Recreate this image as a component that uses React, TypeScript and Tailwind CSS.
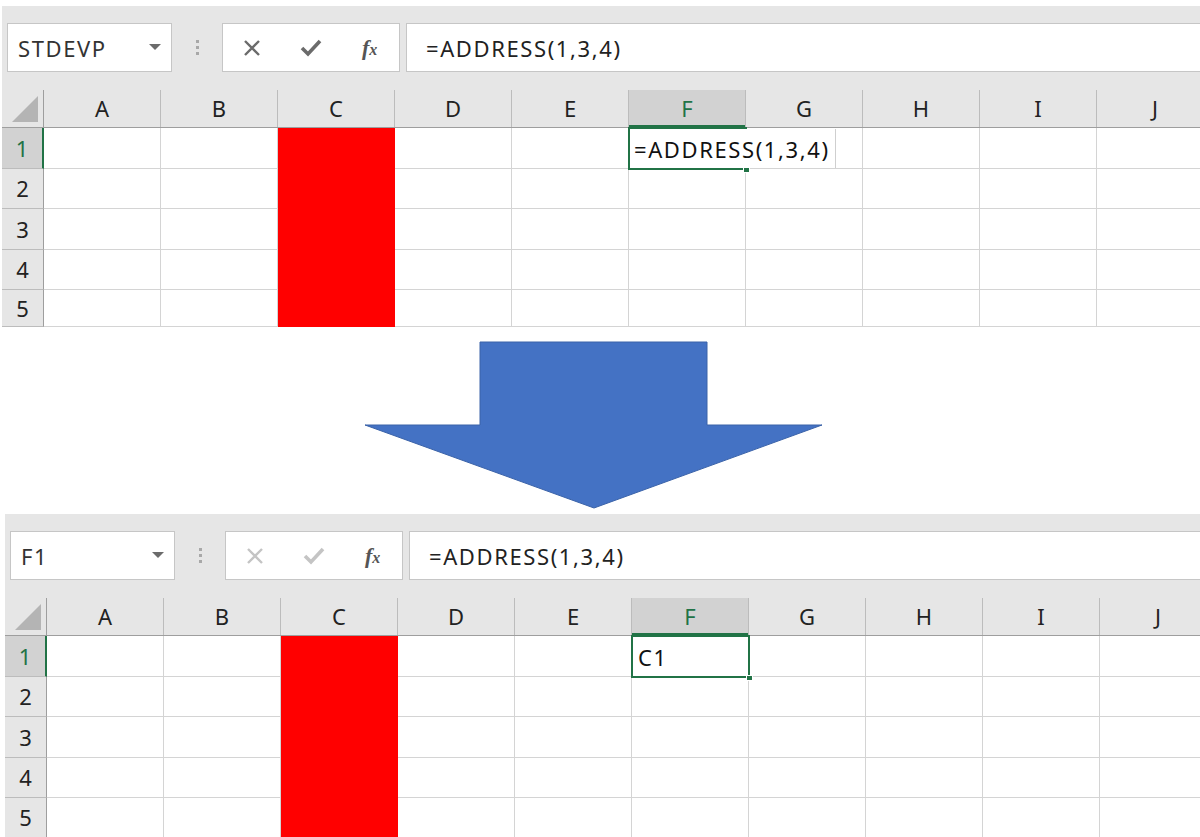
import React from "react";

const COLS = ["A", "B", "C", "D", "E", "F", "G", "H", "I", "J"];
const ROW_H = [41, 40, 41, 40, 40];

function Sheet({
  name,
  formula,
  cellText,
  editing,
  lastRowH,
}: {
  name: string;
  formula: string;
  cellText: string;
  editing: boolean;
  lastRowH: number;
}) {
  const iconColor = editing ? "#6b6b6b" : "#c4c4c4";
  const heights = [...ROW_H.slice(0, 4), lastRowH];
  return (
    <div className="w-full overflow-hidden bg-white font-['Noto_Sans','Noto_Sans_CJK_JP',sans-serif]">
      {/* toolbar */}
      <div className="h-[84px] bg-[#e6e6e6] flex items-start pt-[17px] pl-[5px]">
        <div className="w-[165px] h-[49px] shrink-0 bg-white border border-[#c6c6c6] flex items-center justify-between pl-[10px] pr-[10px]">
          <span className="text-[22px] tracking-[1.6px] leading-none text-[#333]">{name}</span>
          <svg width="12" height="7" viewBox="0 0 12 7">
            <path d="M0 0 L12 0 L6 6 Z" fill="#6b6b6b" />
          </svg>
        </div>
        <div className="w-[50px] h-[49px] shrink-0 flex flex-col items-center justify-center gap-[3px]">
          <div className="w-[3px] h-[3px] bg-[#a8a8a8]" />
          <div className="w-[3px] h-[3px] bg-[#a8a8a8]" />
          <div className="w-[3px] h-[3px] bg-[#a8a8a8]" />
        </div>
        <div className="w-[178px] h-[49px] shrink-0 bg-white border border-[#c6c6c6] flex items-center">
          <div className="w-[59px] flex justify-center">
            <svg width="18" height="18" viewBox="0 0 18 18">
              <path d="M2 2 L16 16 M16 2 L2 16" stroke={iconColor} strokeWidth="2.4" fill="none" />
            </svg>
          </div>
          <div className="w-[59px] flex justify-center">
            <svg width="22" height="18" viewBox="0 0 22 18">
              <path d="M2 9 L8 15 L20 2" stroke={iconColor} strokeWidth="3.6" fill="none" />
            </svg>
          </div>
          <div className="w-[59px] flex justify-center">
            <span className="font-['Liberation_Serif',serif] italic font-bold text-[22px] leading-none text-[#555]">
              f<span className="text-[16px]">x</span>
            </span>
          </div>
        </div>
        <div className="ml-[6px] flex-1 h-[49px] bg-white border border-r-0 border-[#c6c6c6] flex items-center pl-[19px]">
          <span className="text-[22px] tracking-[1.6px] leading-none text-[#222]">{formula}</span>
        </div>
      </div>

      {/* grid */}
      <div className="relative">
        {/* header row */}
        <div className="flex h-[38px] bg-[#e6e6e6] border-b border-[#9e9e9e]">
          <div className="w-[42px] shrink-0 border-r border-[#9e9e9e] flex items-end justify-end pr-[5px] pb-[5px]">
            <svg width="26" height="26" viewBox="0 0 26 26">
              <path d="M26 0 L26 26 L0 26 Z" fill="#b4b4b4" />
            </svg>
          </div>
          {COLS.map((c) => (
            <div
              key={c}
              className={
                c === "F"
                  ? "w-[117px] shrink-0 bg-[#d2d2d2] border-r border-[#bcbcbc] flex items-center justify-center text-[22px] text-[#217346] shadow-[inset_0_-2px_0_#217346]"
                  : "w-[117px] shrink-0 border-r border-[#bcbcbc] flex items-center justify-center text-[22px] text-[#222]"
              }
            >
              {c}
            </div>
          ))}
        </div>
        {/* rows */}
        {heights.map((h, i) => (
          <div key={i} className="flex" style={{ height: h }}>
            <div
              className={
                i === 0
                  ? "w-[42px] shrink-0 bg-[#d2d2d2] border-r-2 border-[#217346] border-b border-b-[#bcbcbc] flex items-center justify-center text-[22px] text-[#217346]"
                  : "w-[42px] shrink-0 bg-[#e6e6e6] border-r border-[#9e9e9e] border-b border-b-[#bcbcbc] flex items-center justify-center text-[22px] text-[#222]"
              }
            >
              {i + 1}
            </div>
            {COLS.map((c) => (
              <div
                key={c}
                className={
                  c === "C"
                    ? "w-[117px] shrink-0 bg-[#ff0000]"
                    : "w-[117px] shrink-0 border-r border-b border-[#d4d4d4]"
                }
              />
            ))}
          </div>
        ))}

        {/* selection on F1 */}
        <div className="absolute left-[626px] top-[37px] w-[119px] h-[43px] border-2 border-[#217346]">
          {!editing && (
            <div className="h-full flex items-center pl-[5px] text-[22px] tracking-[1.6px] text-[#111] leading-none">
              {cellText}
            </div>
          )}
        </div>
        {editing && (
          <div className="absolute left-[628px] top-[39px] w-[206px] h-[39px] bg-white border-r border-[#cfcfcf] flex items-center pl-[4px] text-[22px] tracking-[1.6px] text-[#111] leading-none whitespace-nowrap">
            {cellText}
          </div>
        )}
        <div className="absolute left-[741px] top-[77px] w-[7px] h-[6px] bg-[#217346] border border-white" />
      </div>
    </div>
  );
}

export default function App() {
  return (
    <div className="w-[1200px] h-[837px] bg-white overflow-hidden">
      <div className="pt-[6px] pl-[2px]">
        <Sheet name="STDEVP" formula="=ADDRESS(1,3,4)" cellText="=ADDRESS(1,3,4)" editing lastRowH={37} />
      </div>
      <div className="h-[187px] flex">
        <svg width="1200" height="187" viewBox="0 0 1200 187">
          <polygon
            points="480,15 707,15 707,98 822,98 594,181 365,98 480,98"
            fill="#4472c4"
            stroke="#3a62a8"
            strokeWidth="1"
          />
        </svg>
      </div>
      <div className="pl-[5px]">
        <Sheet name="F1" formula="=ADDRESS(1,3,4)" cellText="C1" editing={false} lastRowH={40} />
      </div>
    </div>
  );
}
